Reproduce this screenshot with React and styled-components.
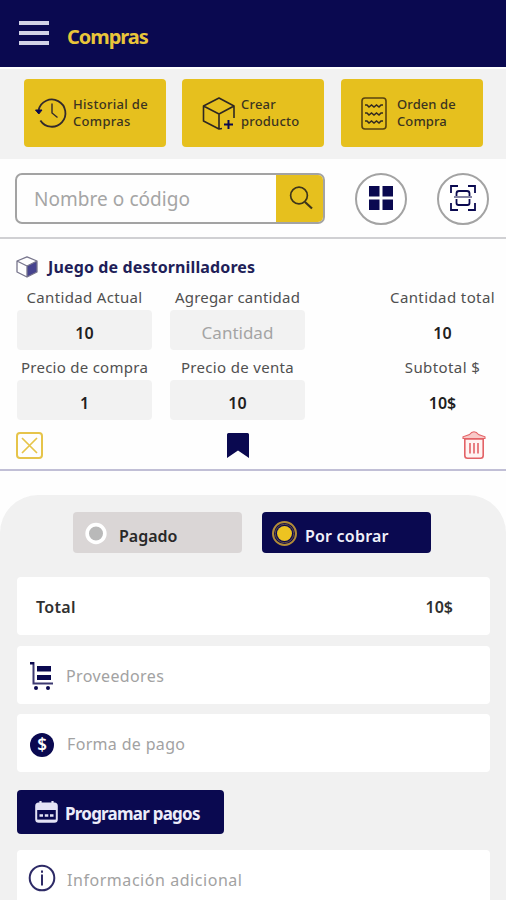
import React from "react";
import styled, { createGlobalStyle } from "styled-components";

const navy = "#0a0950";
const gold = "#e6c01e";

const Global = createGlobalStyle`
  * { box-sizing: border-box; }
  body { margin: 0; background: #fefefe; overflow: hidden; }
  button { font: inherit; border: 0; margin: 0; }
`;

const Screen = styled.main`
  width: 506px;
  height: 900px;
  overflow: hidden;
  display: flex;
  flex-direction: column;
  font-family: "Noto Sans", "Open Sans", sans-serif;
`;

const Text = styled.span`
  display: block;
  white-space: nowrap;
  font-size: ${(p) => p.$size || 15}px;
  font-weight: ${(p) => p.$weight || 400};
  letter-spacing: ${(p) => p.$track || 0}px;
  color: ${(p) => p.$color || "#505050"};
  line-height: 20px;
`;

const Header = styled.header`
  flex: none;
  height: 67px;
  padding: 6px 0 0 19px;
  display: flex;
  align-items: center;
  gap: 18px;
  background: ${navy};
`;

const MenuButton = styled.button`
  padding: 0;
  margin-top: -7px;
  background: none;
  display: flex;
  flex-direction: column;
  gap: 6px;
`;

const MenuBar = styled.i`
  width: 30px;
  height: 4px;
  background: #d2d2e6;
`;

const Actions = styled.nav`
  flex: none;
  height: 92px;
  padding: 10px 23px 0 24px;
  border-top: 2px solid #fff;
  background: #f2f2f2;
  display: flex;
  gap: 16px;
`;

const ActionButton = styled.button`
  width: 142px;
  height: 68px;
  padding: 0 0 0 ${(p) => p.$inset}px;
  border-radius: 4px;
  background: ${gold};
  display: flex;
  align-items: center;
  gap: ${(p) => p.$gap}px;
  text-align: left;
  &:last-child { margin-left: 1px; }
`;

const ActionLabel = styled(Text)`
  font-size: 13px;
  font-weight: 500;
  line-height: 17px;
  color: #3b3420;
  white-space: pre;
`;

const SearchRow = styled.section`
  flex: none;
  height: 80px;
  padding: 14px 17px 0 15px;
  border-bottom: 2px solid #d0d0d3;
  display: flex;
`;

const SearchBox = styled.div`
  width: 310px;
  height: 51px;
  border: 2px solid #a3a3a3;
  border-radius: 7px;
  overflow: hidden;
  display: flex;
  align-items: center;
  justify-content: space-between;
  padding-left: 17px;
`;

const SearchButton = styled.button`
  width: 47px;
  height: 48px;
  padding: 0 0 2px 3px;
  background: ${gold};
  display: grid;
  place-items: center;
`;

const RoundButton = styled.button`
  width: 52px;
  height: 52px;
  padding: 0 0 2px;
  margin-left: 30px;
  border: 2px solid #a3a3a3;
  border-radius: 50%;
  background: #fff;
  display: grid;
  place-items: center;
`;

const Product = styled.article`
  flex: none;
  height: 232px;
  border-bottom: 2px solid #c1bfd6;
`;

const ProductTitle = styled.div`
  height: 48px;
  padding: 8px 0 0 16px;
  display: flex;
  align-items: center;
  gap: 10px;
`;

const Fields = styled.div`
  padding: 0 11px 0 17px;
  display: grid;
  grid-template-columns: 135px 135px 1fr;
  grid-auto-rows: 70px;
  column-gap: 18px;
`;

const Field = styled.div`
  display: flex;
  flex-direction: column;
  align-items: center;
  gap: 3px;
  padding-left: ${(p) => (p.$summary ? 67 : 0)}px;
`;

const Value = styled.div`
  width: ${(p) => (p.$plain ? "auto" : "135px")};
  height: 40px;
  padding-top: 5px;
  border-radius: 4px;
  background: ${(p) => (p.$plain ? "none" : "#f2f2f2")};
  display: grid;
  place-items: center;
`;

const ProductTools = styled.div`
  padding: 4px 20px 0 16px;
  display: grid;
  grid-template-columns: 211px 1fr auto;
  align-items: center;
`;

const Payment = styled.section`
  flex: 1;
  margin-top: 24px;
  padding: 17px 16px 0 17px;
  border-radius: 38px 38px 0 0;
  background: #f1f1f1;
`;

const StatusRow = styled.div`
  padding: 0 56px;
  display: flex;
  gap: 20px;
`;

const StatusButton = styled.button`
  width: 169px;
  height: 41px;
  padding: 2px 0 0 ${(p) => (p.$active ? 10 : 11)}px;
  border-radius: 4px;
  background: ${(p) => (p.$active ? navy : "#dad6d6")};
  display: flex;
  align-items: center;
  gap: ${(p) => (p.$active ? 8 : 11)}px;
  & > span { padding-top: 4px; }
`;

const Card = styled.div`
  height: 58px;
  margin-top: ${(p) => p.$top}px;
  padding: 2px 37px 0 ${(p) => p.$left || 12}px;
  border-radius: 4px;
  background: #fff;
  display: flex;
  align-items: center;
  gap: ${(p) => p.$gap || 12}px;
  justify-content: ${(p) => (p.$spread ? "space-between" : "flex-start")};
`;

const ScheduleButton = styled.button`
  width: 207px;
  height: 44px;
  margin-top: 18px;
  padding: 0 0 0 18px;
  border-radius: 4px;
  background: ${navy};
  display: flex;
  align-items: center;
  gap: 7px;
  & > span { padding-top: 3px; }
`;

const Icon = styled.svg.attrs({ fill: "none", "aria-hidden": true })`
  display: block;
  flex: none;
  overflow: visible;
`;

const HistoryIcon = () => (
  <Icon width="32" height="32" viewBox="0 0 32 32" stroke="#332a2c" strokeWidth="1.8">
    <path d="M3.6 13A13.6 13.6 0 1 1 5.4 23.5" />
    <path d="M17 6.5v9.5l5.5 4.5" strokeWidth="1.4" />
    <path d="M.5 13 3.8 17 7 13Z" fill={navy} stroke={navy} strokeWidth="1" />
  </Icon>
);

const BoxPlusIcon = () => (
  <Icon width="33" height="33" viewBox="0 0 33 33" stroke="#2e2722" strokeWidth="1.6" strokeLinejoin="round">
    <path d="M20 31.5 17 32 1.5 24V9L17 1l15 8v12M1.5 9 17 17l15-8M17 17v15" />
    <path d="M26.5 23v9M22 27.5h9" stroke={navy} strokeWidth="2" />
  </Icon>
);

const OrderIcon = () => (
  <Icon width="26" height="33" viewBox="0 0 26 33" stroke="#59430f" strokeWidth="1.6">
    <rect x="1" y="1" width="24" height="31" rx="3" />
    <path d="M4 8h2l2 2 2.5-2 2.5 2 2.5-2 2.5 2 2-2h2M4 16h2l2 2 2.5-2 2.5 2 2.5-2 2.5 2 2-2h2M4 24h2l2 2 2.5-2 2.5 2 2.5-2 2.5 2 2-2h2" stroke="#332a20" />
  </Icon>
);

const SearchIcon = () => (
  <Icon width="24" height="24" viewBox="0 0 24 24" stroke="#3e351a" strokeWidth="1.7">
    <circle cx="10" cy="9.5" r="8.4" />
    <path d="m16 16 7 6.5" strokeWidth="2.2" />
  </Icon>
);

const GridIcon = () => (
  <Icon width="24" height="24" viewBox="0 0 24 24">
    <path d="M0 0h10.5v10.5H0zM13.5 0H24v10.5H13.5zM0 13.5h10.5V24H0zM13.5 13.5H24V24H13.5z" fill={navy} />
  </Icon>
);

const ScanIcon = () => (
  <Icon width="26" height="26" viewBox="0 0 26 26" stroke={navy} strokeWidth="1.8">
    <path d="M1 8V1h7M18 1h7v7M25 18v7h-7M8 25H1v-7" />
    <path d="M6.5 11V8.5a2.5 2.5 0 0 1 2.5-2.5h8a2.5 2.5 0 0 1 2.5 2.5V11M6.5 14v4a2 2 0 0 0 2 2h9a2 2 0 0 0 2-2v-4" />
    <path d="M4 12h18" stroke="#77779b" />
  </Icon>
);

const CubeIcon = () => (
  <Icon width="22" height="22" viewBox="0 0 22 22" strokeLinejoin="round">
    <path d="m11 10 10-5v11l-10 5Z" fill="#46438e" />
    <path d="M11 .8 21 5v11l-10 5L1 16V5ZM1 5l10 5 10-5M11 10v11" stroke="#77758c" strokeWidth="1.3" />
  </Icon>
);

const CrossBoxIcon = () => (
  <Icon width="27" height="27" viewBox="0 0 27 27" stroke="#e6c44a" strokeWidth="2">
    <rect x="1" y="1" width="25" height="25" rx="3" />
    <path d="m6 6 15 15M21 6 6 21" strokeWidth="1.7" />
  </Icon>
);

const BookmarkIcon = () => (
  <Icon width="22" height="25" viewBox="0 0 22 25">
    <path d="M0 1.5Q0 0 1.5 0h19Q22 0 22 1.5V25l-11-7.5L0 25Z" fill={navy} />
  </Icon>
);

const TrashIcon = () => (
  <Icon width="24" height="28" viewBox="0 0 24 28" stroke="#e36266" strokeWidth="1.6">
    <path d="M2.8 8h18.4v16.5q0 2.7-2.7 2.7h-13q-2.7 0-2.7-2.7Z" fill="#fff3f2" />
    <path d="M1 7.5V5.8L7.5 3.5Q9.5 .7 12 .7t4.500 2.800L23 5.800V7.500Z" fill="#f8c9c8" strokeWidth="1.1" />
    <path d="M8 12v10.500M12 12v10.500M16 12v10.500" />
  </Icon>
);

const RadioIcon = ({ active }) => (
  <Icon width={active ? 25 : 24} height="25" viewBox="0 0 25 25">
    {active ? (
      <>
        <circle cx="12.5" cy="12.5" r="11.5" fill={navy} stroke="#b28c38" strokeWidth="2" />
        <circle cx="12.5" cy="12.5" r="9.2" stroke="#8a6b3c" strokeWidth=".7" />
        <circle cx="12.5" cy="12.5" r="7.5" fill="#edc321" />
      </>
    ) : (
      <circle cx="12.5" cy="12.5" r="9.2" fill="#b9b9b9" stroke="#fff" strokeWidth="3.8" />
    )}
  </Icon>
);

const CartIcon = () => (
  <Icon width="24" height="28" viewBox="0 0 24 28">
    <path d="M0 1h3.500v20.500h19.500" stroke="#3c3971" strokeWidth="2" />
    <path d="M7 4h14v5.500H7zM7 13h14v5H7z" fill={navy} />
    <path d="M0 0h4v2.500H0z" fill={navy} />
    <circle cx="6" cy="26" r="2" fill={navy} />
    <circle cx="18" cy="26" r="2" fill={navy} />
  </Icon>
);

const Coin = styled.span`
  width: 24px;
  height: 24px;
  margin-top: 2px;
  border-radius: 50%;
  background: ${navy};
  color: #fff;
  font-size: 17px;
  font-weight: 600;
  line-height: 24px;
  text-align: center;
`;

const CalendarIcon = () => (
  <Icon width="23" height="22" viewBox="0 0 23 22" stroke="#e4e3f5">
    <rect x="1.2" y="2.5" width="20.6" height="18.3" rx="2.5" strokeWidth="2" />
    <path d="M2 3h19v6H2z" fill="#e4e3f5" stroke="none" />
    <path d="M5.5 0v4M17.5 0v4" strokeWidth="2.2" />
    <path d="M4.500 14.500h3.500M9.800 14.500h3.500M15 14.500h3.500" strokeWidth="2.600" />
    <path d="M2 19.800h19" strokeWidth="2.400" />
  </Icon>
);

const InfoMark = styled.span`
  margin-top: -5px;
`;

const InfoIcon = () => (
  <InfoMark>
    <Icon width="26" height="26" viewBox="0 0 26 26" stroke="#2d2a66" strokeWidth="2">
      <circle cx="13" cy="13" r="12.300" />
      <path d="M13 9.500v11M13 5.500v2.300" />
    </Icon>
  </InfoMark>
);

const fields = [
  { label: "Cantidad Actual", track: 0.33, value: "10" },
  { label: "Agregar cantidad", track: 0.2, placeholder: "Cantidad" },
  { label: "Cantidad total", track: 0.4, value: "10", plain: true },
  { label: "Precio de compra", track: 0.27, value: "1" },
  { label: "Precio de venta", track: 0.33, value: "10" },
  { label: "Subtotal $", track: 0.4, value: "10$", plain: true },
];

export default function App() {
  return (
    <Screen>
      <Global />
      <Header>
        <MenuButton aria-label="Menú"><MenuBar /><MenuBar /><MenuBar /></MenuButton>
        <Text $size={20} $weight={700} $track={-1.05} $color="#e9c53a">Compras</Text>
      </Header>
      <Actions>
        <ActionButton $inset={11} $gap={6}>
          <HistoryIcon /><ActionLabel $track={0.3}>{"Historial de\nCompras"}</ActionLabel>
        </ActionButton>
        <ActionButton $inset={20} $gap={6}>
          <BoxPlusIcon /><ActionLabel $track={0.2}>{"Crear\nproducto"}</ActionLabel>
        </ActionButton>
        <ActionButton $inset={20} $gap={10}>
          <OrderIcon /><ActionLabel $track={0.1}>{"Orden de\nCompra"}</ActionLabel>
        </ActionButton>
      </Actions>
      <SearchRow>
        <SearchBox>
          <Text $size={19} $track={0.05} $color="#a5a5a5">Nombre o código</Text>
          <SearchButton aria-label="Buscar"><SearchIcon /></SearchButton>
        </SearchBox>
        <RoundButton aria-label="Cuadrícula"><GridIcon /></RoundButton>
        <RoundButton aria-label="Escanear"><ScanIcon /></RoundButton>
      </SearchRow>
      <Product>
        <ProductTitle>
          <CubeIcon />
          <Text $size={16} $weight={700} $track={0.13} $color="#211e58">Juego de destornilladores</Text>
        </ProductTitle>
        <Fields>
          {fields.map((f) => (
            <Field key={f.label} $summary={f.plain}>
              <Text $track={f.track}>{f.label}</Text>
              <Value $plain={f.plain}>
                {f.value ? (
                  <Text $size={16} $weight={600} $color="#202020">{f.value}</Text>
                ) : (
                  <Text $size={17} $color="#a4a4a4">{f.placeholder}</Text>
                )}
              </Value>
            </Field>
          ))}
        </Fields>
        <ProductTools><CrossBoxIcon /><BookmarkIcon /><TrashIcon /></ProductTools>
      </Product>
      <Payment>
        <StatusRow>
          <StatusButton>
            <RadioIcon />
            <Text $size={16} $weight={600} $color="#282828">Pagado</Text>
          </StatusButton>
          <StatusButton $active>
            <RadioIcon active />
            <Text $size={16} $weight={600} $track={0.2} $color="#f0f0fa">Por cobrar</Text>
          </StatusButton>
        </StatusRow>
        <Card $top={24} $left={19} $spread>
          <Text $size={16} $weight={600} $track={0.3} $color="#303030">Total</Text>
          <Text $size={16} $weight={600} $color="#303030">10$</Text>
        </Card>
        <Card $top={11} $left={13}>
          <CartIcon /><Text $size={16} $track={0.38} $color="#a2a2a2">Proveedores</Text>
        </Card>
        <Card $top={10} $left={13} $gap={13}>
          <Coin>$</Coin><Text $size={16} $track={0.33} $color="#a2a2a2">Forma de pago</Text>
        </Card>
        <ScheduleButton>
          <CalendarIcon /><Text $size={17} $weight={700} $track={-0.77} $color="#ececfa">Programar pagos</Text>
        </ScheduleButton>
        <Card $top={16} $gap={12}>
          <InfoIcon /><Text $size={16} $track={0.55} $color="#a2a2a2">Información adicional</Text>
        </Card>
      </Payment>
    </Screen>
  );
}
